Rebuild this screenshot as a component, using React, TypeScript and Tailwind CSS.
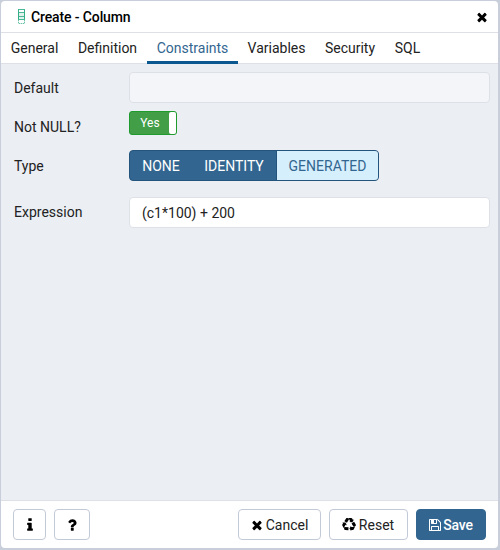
import type { ReactNode } from 'react';

const paths = {
  times:
    'M1490 1322q0 40-28 68l-136 136q-28 28-68 28t-68-28l-294-294-294 294q-28 28-68 28t-68-28l-136-136q-28-28-28-68t28-68l294-294-294-294q-28-28-28-68t28-68l136-136q28-28 68-28t68 28l294 294 294-294q28-28 68-28t68 28l136 136q28 28 28 68t-28 68l-294 294 294 294q28 28 28 68z',
  save: 'M512 1536h768v-384h-768v384zm896 0h128v-896q0-14-10-38.5t-20-34.5l-281-281q-10-10-34-20t-39-10v416q0 40-28 68t-68 28h-576q-40 0-68-28t-28-68v-416h-128v1280h128v-416q0-40 28-68t68-28h832q40 0 68 28t28 68v416zm-384-928v-320q0-13-9.5-22.5t-22.5-9.5h-192q-13 0-22.5 9.5t-9.5 22.5v320q0 13 9.5 22.5t22.5 9.5h192q13 0 22.5-9.5t9.5-22.5zm640 32v928q0 40-28 68t-68 28h-1344q-40 0-68-28t-28-68v-1344q0-40 28-68t68-28h928q40 0 88 20t76 48l280 280q28 28 48 76t20 88z',
  info: 'M1216 1344v128q0 26-19 45t-45 19h-512q-26 0-45-19t-19-45v-128q0-26 19-45t45-19h64v-384h-64q-26 0-45-19t-19-45v-128q0-26 19-45t45-19h384q26 0 45 19t19 45v576h64q26 0 45 19t19 45zm-128-1152v192q0 26-19 45t-45 19h-256q-26 0-45-19t-19-45v-192q0-26 19-45t45-19h256q26 0 45 19t19 45z',
  question:
    'M1088 1256v240q0 16-12 28t-28 12h-240q-16 0-28-12t-12-28v-240q0-16 12-28t28-12h240q16 0 28 12t12 28zm316-600q0 54-15.5 101t-35 76.5-55 59.5-57.5 43.5-61 35.5q-41 23-68.5 65t-27.5 67q0 17-12 32.5t-28 15.5h-240q-15 0-25.5-18.5t-10.5-37.5v-45q0-83 65-156.5t143-108.5q59-27 84-56t25-76q0-42-46.5-74t-107.5-32q-65 0-108 29-35 25-107 115-13 16-31 16-12 0-25-8l-164-125q-13-10-15.5-25t5.5-28q160-266 464-266 80 0 161 31t146 83 106 127.5 41 158.5z',
  recycle:
    'M836 1169l-15 368-2 22-420-29q-36-3-67-31.5t-47-65.5q-11-27-14.5-55t4-65 12-55 21.5-64 19-53q78 12 509 28zm-387-586l180 379-147-92q-63 72-111.5 144.5t-72.5 125-39.5 94.5-18.5 63l-4 21-190-357q-17-26-18-56t6-47l8-18q35-63 114-188l-140-86zm1231 517l-188 359q-12 29-36.5 46.5t-43.5 20.5l-18 4q-71 7-219 12l8 164-230-367 211-362 7 173q170 16 283 5t170-33zm-785-924q-47 63-265 435l-317-187-19-12 225-356q20-31 60-45t80-10q24 2 48.5 12t42 21 41.5 33 36 34.5 36 39.5 32 35zm655 307l212 363q18 37 12.5 76t-27.5 74q-13 20-33 37t-38 28-48.5 22-47 16-51.5 14-46 12q-34-72-265-436l313-195zm-143-226l142-83-220 373-419-20 151-86q-34-89-75-166t-75.5-123.5-64.5-80-47-46.5l-17-13 405 1q31-3 58 10.5t39 28.5l11 15q39 61 112 190z',
};

function Icon({ name, className }: { name: keyof typeof paths; className: string }) {
  return (
    <svg viewBox="0 0 1792 1792" fill="currentColor" className={className} aria-hidden="true">
      <path d={paths[name]} />
    </svg>
  );
}

function ColumnIcon() {
  return (
    <svg viewBox="0 0 8 15" className="mr-[6px] h-[15px] w-2" fill="none" aria-hidden="true">
      <rect x="1" y="3" width="6" height="8" fill="#dff3ec" />
      <path d="M1 .5h7M1 3.5h7M1 7.5h7M1 10.5h7" stroke="#4db897" />
      <path d="M1.5 .5v10M7.5 .5v10" stroke="#35ae88" />
      <path d="M1.5 11v3.5h6V11" stroke="#6cc5a9" strokeDasharray="1.4 .6" />
    </svg>
  );
}

function Row({ label, className, children }: { label: string; className: string; children: ReactNode }) {
  return (
    <div className={`flex items-start ${className}`}>
      <div className="w-[115px] shrink-0 pt-[6px] leading-5">{label}</div>
      {children}
    </div>
  );
}

const tabs = [
  { name: 'General', width: 'w-[67px]' },
  { name: 'Definition', width: 'w-[79px]' },
  { name: 'Constraints', width: 'w-[91px]' },
  { name: 'Variables', width: 'w-[77px]' },
  { name: 'Security', width: 'w-[70px]' },
  { name: 'SQL', width: 'w-[45px]' },
];

const button = 'flex h-[31px] items-center justify-center rounded-[4px] border';

export default function App() {
  return (
    <div className="h-[550px] w-[500px] bg-[#c9cfda] pb-[2px] pl-px pr-[2px] pt-px font-['Roboto','Liberation_Sans',sans-serif] text-sm text-[#222222]">
      <div className="flex h-full flex-col overflow-hidden rounded-[4px] bg-white">
        <header className="flex h-8 shrink-0 items-center border-b border-[#dde0e6] pl-4 pr-[9px] text-black">
          <ColumnIcon />
          <h1 className="grow text-sm font-medium tracking-[-0.12px]">Create - Column</h1>
          <Icon name="times" className="h-[14px] w-[14px]" />
        </header>
        <nav className="flex h-[31px] shrink-0 border-b border-[#dde0e6]">
          {tabs.map((tab) => (
            <div
              key={tab.name}
              className={`flex h-[31px] items-center justify-center border-b-[3px] pt-[2px] ${tab.width} ${
                tab.name === 'Constraints' ? 'border-[#0b5790] text-[#326690]' : 'border-transparent'
              }`}
            >
              {tab.name}
            </div>
          ))}
        </nav>
        <main className="grow bg-[#ebeef3] pl-[13px] pr-2 pt-2">
          <Row label="Default" className="h-[39px]">
            <div className="h-[31px] grow rounded-[4px] border border-[#dde0e6] bg-[#f3f5f9]" />
          </Row>
          <Row label="Not NULL?" className="h-[39px]">
            <div className="flex h-6 w-12 rounded-[3px] border border-[#1f9a2c] bg-[#429e47] text-white">
              <span className="w-[39px] pl-px text-center text-[12px] leading-[23px]">Yes</span>
              <span className="h-full w-[7px] rounded-[2px] bg-white" />
            </div>
          </Row>
          <Row label="Type" className="h-[46px]">
            <div className="flex h-[31px] w-[250px] overflow-hidden rounded-[4px] border border-[#24537b] bg-[#326690] leading-[30px] text-white">
              <span className="w-[62px] text-center">NONE</span>
              <span className="w-[84px] text-center">IDENTITY</span>
              <span className="grow border-l border-[#24537b] bg-[#d6effc] text-center text-[#326690]">GENERATED</span>
            </div>
          </Row>
          <Row label="Expression" className="h-[39px]">
            <div className="mt-px h-[31px] grow rounded-[4px] border border-[#dde0e6] bg-white pl-3 leading-[30px]">
              (c1*100) + 200
            </div>
          </Row>
        </main>
        <footer className="flex h-12 shrink-0 items-center border-t border-[#dde0e6] pl-3 pr-3">
          <button className={`${button} mr-2 w-[33px] border-[#c3cad7] text-black`} aria-label="Info">
            <Icon name="info" className="h-4 w-4" />
          </button>
          <button className={`${button} w-9 border-[#c3cad7] pr-px text-black`} aria-label="Help">
            <Icon name="question" className="h-4 w-4" />
          </button>
          <div className="grow" />
          <button className={`${button} mr-2 w-[83px] gap-[2px] border-[#c3cad7] pr-px`}>
            <Icon name="times" className="h-[14px] w-[14px] text-black" />
            Cancel
          </button>
          <button className={`${button} mr-2 w-[79px] gap-[3px] border-[#c3cad7] pr-px`}>
            <Icon name="recycle" className="h-[14px] w-[14px] text-black" />
            Reset
          </button>
          <button
            className={`${button} w-[70px] gap-px border-[#326690] bg-[#326690] pr-px font-medium tracking-[-0.2px] text-white`}
          >
            <Icon name="save" className="h-[14px] w-[14px]" />
            Save
          </button>
        </footer>
      </div>
    </div>
  );
}
